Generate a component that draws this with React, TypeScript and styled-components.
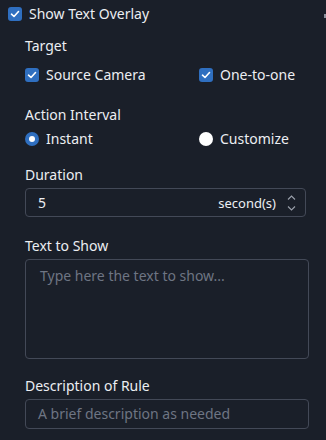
import React, { useState } from "react";
import styled, { createGlobalStyle } from "styled-components";

const GlobalStyle = createGlobalStyle`
  html, body {
    margin: 0;
    padding: 0;
    background: #1a1f29;
  }
  body {
    font-family: "Noto Sans", "Open Sans", sans-serif;
    color: #eceef2;
  }
`;

const Panel = styled.div`
  width: 326px;
  height: 440px;
  box-sizing: border-box;
  padding: 4px 17px 0 8px;
  background: #1a1f29;
  position: relative;
  overflow: hidden;
`;

const Body = styled.div`
  display: flex;
  flex-direction: column;
  padding-left: 17px;
`;

const CheckRow = styled.label`
  display: flex;
  align-items: center;
  gap: 7px;
  font-size: 14px;
  line-height: 19px;
  cursor: pointer;
`;

const Box = styled.span<{ $checked?: boolean }>`
  width: 14px;
  height: 14px;
  border-radius: 3px;
  box-sizing: border-box;
  background: ${(p) => (p.$checked ? "#2f6fc0" : "transparent")};
  border: ${(p) => (p.$checked ? "none" : "1px solid #5a6070")};
  display: flex;
  align-items: center;
  justify-content: center;
  flex-shrink: 0;
`;

const Radio = styled.span<{ $checked?: boolean }>`
  width: 14px;
  height: 14px;
  border-radius: 50%;
  box-sizing: border-box;
  background: ${(p) => (p.$checked ? "#2f6fc0" : "#ffffff")};
  display: flex;
  align-items: center;
  justify-content: center;
  flex-shrink: 0;

  &::after {
    content: "";
    width: 6px;
    height: 6px;
    border-radius: 50%;
    background: #ffffff;
    display: ${(p) => (p.$checked ? "block" : "none")};
  }
`;

const Label = styled.div<{ $top: number }>`
  font-size: 14px;
  line-height: 19px;
  margin-top: ${(p) => p.$top}px;
`;

const OptionRow = styled.div<{ $top: number }>`
  display: grid;
  grid-template-columns: 174px 1fr;
  margin-top: ${(p) => p.$top}px;
`;

const Field = styled.div<{ $top: number; $height: number; $inset?: number }>`
  margin-top: ${(p) => p.$top}px;
  height: ${(p) => p.$height}px;
  margin-right: ${(p) => p.$inset ?? 0}px;
  box-sizing: border-box;
  border: 1px solid #434957;
  border-radius: 4px;
  display: flex;
  align-items: flex-start;
`;

const NumberField = styled(Field)`
  align-items: center;
  padding: 0 9px 0 12px;
  font-size: 14px;
`;

const Value = styled.span`
  flex: 1;
`;

const Unit = styled.span`
  font-size: 13px;
  margin-right: 11px;
`;

const Spinner = styled.div`
  display: flex;
  flex-direction: column;
  gap: 6px;
`;

const Placeholder = styled.div<{ $padLeft: number; $padTop: number }>`
  color: #6e7583;
  font-size: 14px;
  line-height: 19px;
  padding: ${(p) => p.$padTop}px 0 0 ${(p) => p.$padLeft}px;
`;

const ScrollMark = styled.div`
  position: absolute;
  right: 0;
  top: 14px;
  width: 2px;
  height: 4px;
  background: #8a909c;
`;

const Check = () => (
  <svg width="10" height="10" viewBox="0 0 10 10">
    <path d="M1.5 5.2 L4 7.5 L8.5 2.5" fill="none" stroke="#fff" strokeWidth="1.6" strokeLinecap="round" strokeLinejoin="round" />
  </svg>
);

const Chevron = ({ up }: { up?: boolean }) => (
  <svg width="9" height="5" viewBox="0 0 9 5">
    <path
      d={up ? "M1 4.5 L4.5 1 L8 4.5" : "M1 0.5 L4.5 4 L8 0.5"}
      fill="none"
      stroke="#9aa0ab"
      strokeWidth="1.1"
    />
  </svg>
);

export default function App() {
  const [overlay, setOverlay] = useState(true);
  const [source, setSource] = useState(true);
  const [oneToOne, setOneToOne] = useState(true);
  const [interval, setInterval] = useState<"instant" | "custom">("instant");

  return (
    <Panel>
      <GlobalStyle />
      <ScrollMark />
      <CheckRow onClick={() => setOverlay(!overlay)}>
        <Box $checked={overlay}>{overlay && <Check />}</Box>
        Show Text Overlay
      </CheckRow>
      <Body>
        <Label $top={13}>Target</Label>
        <OptionRow $top={10}>
          <CheckRow onClick={() => setSource(!source)}>
            <Box $checked={source}>{source && <Check />}</Box>
            Source Camera
          </CheckRow>
          <CheckRow onClick={() => setOneToOne(!oneToOne)}>
            <Box $checked={oneToOne}>{oneToOne && <Check />}</Box>
            One-to-one
          </CheckRow>
        </OptionRow>
        <Label $top={21}>Action Interval</Label>
        <OptionRow $top={5}>
          <CheckRow onClick={() => setInterval("instant")}>
            <Radio $checked={interval === "instant"} />
            Instant
          </CheckRow>
          <CheckRow onClick={() => setInterval("custom")}>
            <Radio $checked={interval === "custom"} />
            Customize
          </CheckRow>
        </OptionRow>
        <Label $top={17}>Duration</Label>
        <NumberField $top={4} $height={29} $inset={3}>
          <Value>5</Value>
          <Unit>second(s)</Unit>
          <Spinner>
            <Chevron up />
            <Chevron />
          </Spinner>
        </NumberField>
        <Label $top={19}>Text to Show</Label>
        <Field $top={4} $height={100}>
          <Placeholder $padLeft={14} $padTop={6}>Type here the text to show...</Placeholder>
        </Field>
        <Label $top={17}>Description of Rule</Label>
        <Field $top={4} $height={30}>
          <Placeholder $padLeft={12} $padTop={4}>A brief description as needed</Placeholder>
        </Field>
      </Body>
    </Panel>
  );
}
